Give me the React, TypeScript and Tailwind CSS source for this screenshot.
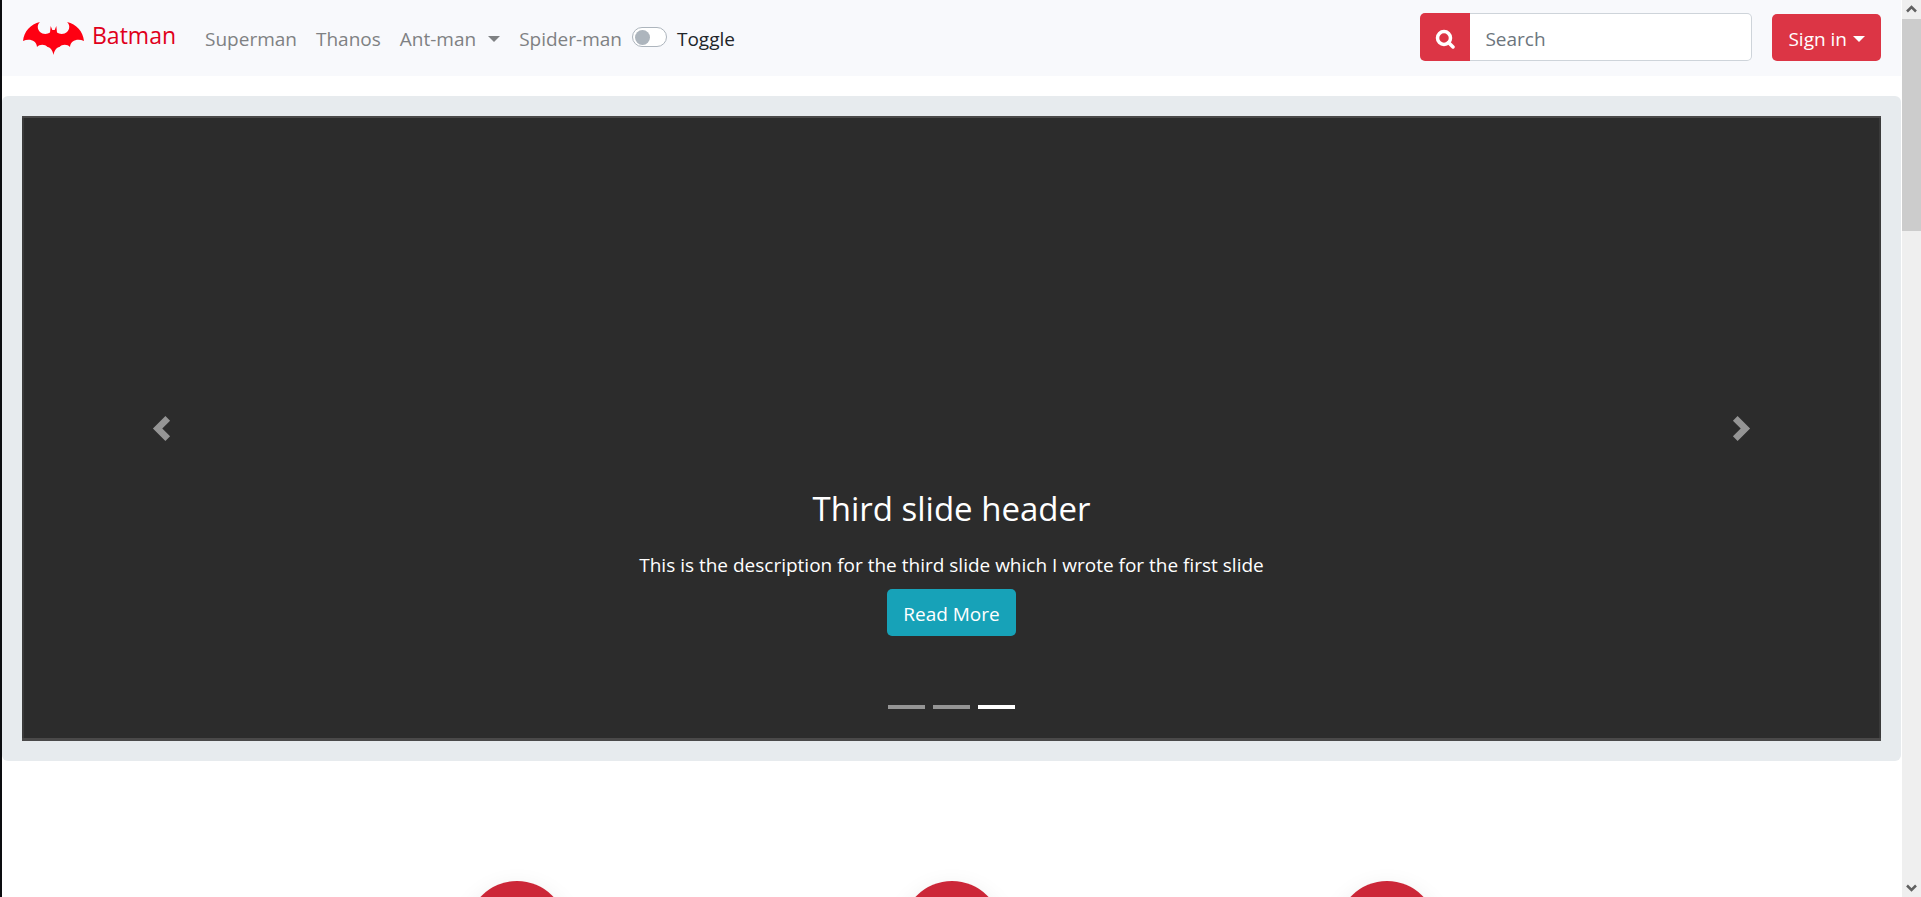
import { useState } from "react";

const NAV_LINK = "text-[#7f8183] hover:text-[#4f5153]";

function BatLogo() {
  return (
    <svg viewBox="0 0 61 33" className="h-[33px] w-[61px]" fill="#fe0012" aria-hidden="true">
      <path d="M0 19C1 9.500 7.500 2 17 0C14 2.500 14 7 17 10C19.500 12.500 24.500 12.500 27 10.500L27.700 4L29.300 8H31.700L33.300 4L34 10.500C36.500 12.500 41.500 12.500 44 10C47 7 47 2.500 44 0C53.500 2 60 9.500 61 19C55 16.500 47.500 18 47 25C44.500 22 39 22 36.500 25C33.500 25 31.200 29 30.500 33C29.800 29 27.500 25 24.500 25C22 22 16.500 22 14 25C13.500 18 6 16.500 0 19Z" />
    </svg>
  );
}

function Caret() {
  return (
    <svg viewBox="0 0 12 6" className="h-[6px] w-3" fill="currentColor" aria-hidden="true">
      <path d="M0 0H12L6 6Z" />
    </svg>
  );
}

function Chevron({ flip = false }: { flip?: boolean }) {
  return (
    <svg viewBox="0 0 8 8" className="size-[25px]" fill="currentColor" aria-hidden="true">
      {flip ? (
        <path d="M2.750 0l-1.500 1.500 2.500 2.500-2.500 2.500 1.500 1.500 4-4-4-4z" />
      ) : (
        <path d="M5.250 0l-4 4 4 4 1.500-1.500-2.500-2.500 2.500-2.500-1.500-1.500z" />
      )}
    </svg>
  );
}

function Navbar() {
  const [on, setOn] = useState(false);
  return (
    <nav className="flex h-[76px] items-center bg-[#f8f9fc] px-5">
      <a href="#" className="mr-[29px] flex items-center gap-2 pl-px text-[23px] leading-8 text-[#e0001b]">
        <BatLogo />
        <span className="pb-[6px]">Batman</span>
      </a>
      <div className="flex items-center gap-[19px] pt-[2px]">
        <a href="#superman" className={NAV_LINK}>Superman</a>
        <a href="#thanos" className={NAV_LINK}>Thanos</a>
        <button type="button" className="flex items-center gap-3 text-[#7f8183]">
          Ant-man
          <Caret />
        </button>
        <a href="#spider-man" className={NAV_LINK}>Spider-man</a>
      </div>
      <label className="ml-[10px] flex items-center gap-[10px] text-[#212529]">
        <input type="checkbox" role="switch" checked={on} onChange={() => setOn(!on)} className="peer sr-only" />
        <span className="mb-[2px] flex h-5 w-[35px] items-center rounded-full border border-[#adb5bd] bg-white px-[2px] peer-checked:justify-end peer-checked:bg-[#dc3545]">
          <span className="size-[15px] rounded-full bg-[#adb5bd]" />
        </span>
        <span className="pt-[2px]">Toggle</span>
      </label>
      <form className="ml-auto flex items-end gap-5 pb-[2px]" onSubmit={(e) => e.preventDefault()}>
        <div className="flex h-12">
          <button type="submit" aria-label="Search" className="flex w-[50px] items-center justify-center rounded-l-[5px] bg-[#dc3545] pt-1 text-white">
            <svg viewBox="0 0 20 20" className="size-5" fill="none" stroke="currentColor" aria-hidden="true">
              <circle cx="9" cy="9" r="6.500" strokeWidth="3.500" />
              <path d="M13.500 13.500L18 18" strokeWidth="3.500" strokeLinecap="round" />
            </svg>
          </button>
          <input
            type="search"
            placeholder="Search"
            aria-label="Search"
            className="w-[282px] rounded-r-[5px] border border-l-0 border-[#ced4da] bg-white px-[15px] pt-1 text-[#495057] outline-none placeholder:text-[#6c757d]"
          />
        </div>
        <button type="button" className="flex h-[47px] items-center gap-[6px] rounded-[5px] bg-[#dc3545] px-4 pt-[3px] text-white">
          Sign in
          <Caret />
        </button>
      </form>
    </nav>
  );
}

function Carousel() {
  const [active, setActive] = useState(2);
  return (
    <section className="mt-5 rounded-[6px] bg-[#e7ebee] p-5">
      <div className="flex h-[625px] bg-[#2c2c2c] text-white shadow-[inset_0_2px_#4a4949,inset_0_-3px_#4a4949,inset_2px_0_#3a3a3a,inset_-2px_0_#3a3a3a]">
        <button type="button" aria-label="Previous" className="flex w-[15%] items-center justify-center text-[#959595]" onClick={() => setActive((active + 2) % 3)}>
          <Chevron />
        </button>
        <div className="flex flex-1 flex-col items-center justify-end pb-8 text-center">
          <h2 className="text-[33px] leading-[42px]">Third slide header</h2>
          <p className="mt-5 leading-[30px]">This is the description for the third slide which I wrote for the first slide</p>
          <button type="button" className="mt-[9px] h-[47px] rounded-[5px] bg-[#17a2b8] px-4 pt-[3px]">Read More</button>
          <div className="mt-[69px] flex gap-2">
            {[0, 1, 2].map((i) => (
              <button
                key={i}
                type="button"
                aria-label={`Slide ${i + 1}`}
                onClick={() => setActive(i)}
                className={i === active ? "h-1 w-[37px] bg-white" : "h-1 w-[37px] bg-[#959595]"}
              />
            ))}
          </div>
        </div>
        <button type="button" aria-label="Next" className="flex w-[15%] items-center justify-center text-[#959595]" onClick={() => setActive((active + 1) % 3)}>
          <Chevron flip />
        </button>
      </div>
    </section>
  );
}

function Features() {
  return (
    <section className="mx-auto mt-[120px] grid max-w-[1305px] grid-cols-3 justify-items-center pb-20">
      {[0, 1, 2].map((i) => (
        <div key={i} className="size-[100px] rounded-full bg-[#cc2738] shadow-[0_8px_25px_rgba(0,0,0,0.1)]" />
      ))}
    </section>
  );
}

function Scrollbar() {
  return (
    <div className="flex w-[19px] flex-col items-center bg-[#efefef] text-[#606060]" aria-hidden="true">
      <svg viewBox="0 0 19 19" className="size-[19px]" fill="none" stroke="currentColor" strokeWidth="2.500">
        <path d="M5 11.500L9.500 7L14 11.500" />
      </svg>
      <div className="h-[212px] w-full bg-[#cccccc]" />
      <svg viewBox="0 0 19 19" className="mt-auto size-[19px]" fill="none" stroke="currentColor" strokeWidth="2.500">
        <path d="M5 7.500L9.500 12L14 7.500" />
      </svg>
    </div>
  );
}

export default function App() {
  return (
    <div className="flex h-screen overflow-hidden border-l-2 border-[#0c0d10] bg-white font-['Open_Sans','Noto_Sans',sans-serif] text-[19px]">
      <main className="mr-px min-w-0 flex-1 overflow-y-auto [scrollbar-width:none]">
        <Navbar />
        <Carousel />
        <Features />
      </main>
      <Scrollbar />
    </div>
  );
}
